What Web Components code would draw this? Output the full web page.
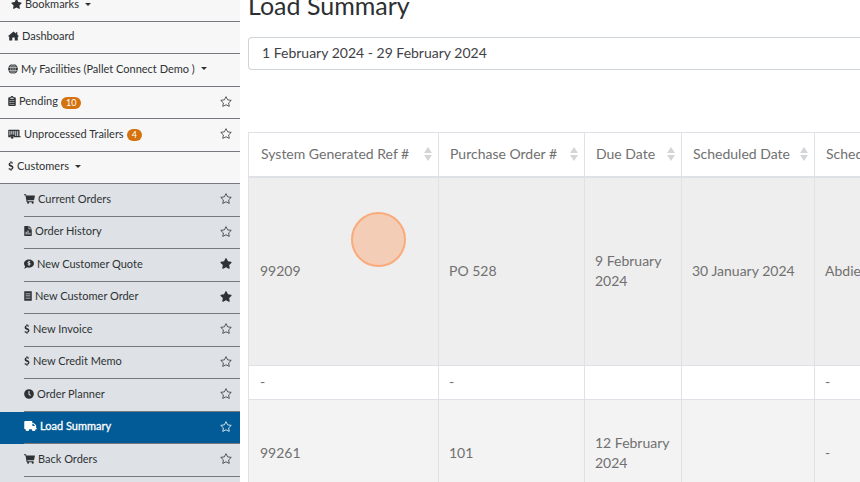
<!DOCTYPE html>
<html lang="en">
<head>
<meta charset="utf-8">
<meta name="viewport" content="width=device-width">
<title>Load Summary</title>
<style>
  html, body { margin: 0; height: 100%; }
  body { overflow: hidden; background: #fff; font-family: Lato, "Liberation Sans", sans-serif; }
</style>
</head>
<body>
<app-shell>
  <side-nav slot="nav">
    <nav-item icon="star" text="Bookmarks" caret inset></nav-item>
    <nav-item icon="home" text="Dashboard"></nav-item>
    <nav-item icon="globe" text="My Facilities (Pallet Connect Demo )" caret></nav-item>
    <nav-item icon="clipboard" text="Pending" badge="10" fav="off"></nav-item>
    <nav-item icon="trailer" text="Unprocessed Trailers" badge="4" fav="off"></nav-item>
    <nav-item icon="dollar" text="Customers" caret></nav-item>
    <nav-item sub icon="cart" text="Current Orders" fav="off"></nav-item>
    <nav-item sub icon="file" text="Order History" fav="off"></nav-item>
    <nav-item sub icon="comment" text="New Customer Quote" fav="on"></nav-item>
    <nav-item sub icon="receipt" text="New Customer Order" fav="on"></nav-item>
    <nav-item sub icon="dollar" text="New Invoice" fav="off"></nav-item>
    <nav-item sub icon="dollar" text="New Credit Memo" fav="off"></nav-item>
    <nav-item sub icon="clock" text="Order Planner" fav="off"></nav-item>
    <nav-item sub active icon="truck" text="Load Summary" fav="off"></nav-item>
    <nav-item sub icon="cart" text="Back Orders" fav="off"></nav-item>
  </side-nav>
  <load-summary></load-summary>
</app-shell>

<script>
const STAR = 'M259.3 17.8L194 150.2 47.9 171.5c-26.2 3.8-36.7 36.1-17.7 54.6l105.7 103-25 145.5c-4.5 26.3 23.2 46 46.4 33.7L288 439.6l130.7 68.7c23.2 12.2 50.9-7.4 46.4-33.7l-25-145.5 105.7-103c19-18.5 8.5-50.8-17.7-54.6L382 150.2 316.7 17.8c-11.7-23.6-45.6-23.9-57.4 0z';
/* name: [view width, markup]; every icon is 512 units high */
const ICONS = {
  star: [576, `<path d="${STAR}"/>`],
  starOutline: [576, `<path d="M288 24L366 176 540 202 414 324 444 492 288 412 132 492 162 324 36 202 210 176Z" fill="none" stroke="currentColor" stroke-width="38" stroke-linejoin="round"/>`],
  home: [576, '<path d="M288 16L8 262q-8 16 8 26h48v184q0 24 24 24h136V352q0-16 16-16h96q16 0 16 16v144h136q24 0 24-24V288h48q16-10 8-26L488 188V56h-72v70Z"/>'],
  globe: [512, '<circle cx="256" cy="256" r="250"/><g fill="none" stroke="#f7f7f7" stroke-width="30"><path d="M20 172h472M20 340h472M256 0v512"/><ellipse cx="256" cy="256" rx="112" ry="262"/></g>'],
  clipboard: [384, '<path fill-rule="evenodd" d="M48 64h72a72 72 0 0 1 144 0h72q48 0 48 48v352q0 48-48 48H48q-48 0-48-48V112Q0 64 48 64Zm144-28a26 26 0 1 0 0 52 26 26 0 0 0 0-52ZM104 120v36h176v-36ZM72 220v44h44v-44Zm80 6v32h160v-32ZM72 310v44h44v-44Zm80 6v32h160v-32ZM72 400v44h44v-44Zm80 6v32h160v-32Z"/>'],
  trailer: [640, '<path fill-rule="evenodd" d="M24 40h528q24 0 24 24v308h64v56H288a90 90 0 0 0-176 0H24Q0 428 0 404V64Q0 40 24 40Zm40 60v220h44V100Zm100 0v180h44V100Zm100 0v190h44V100Zm100 0v260h44V100Zm100 0v260h44V100Z"/><circle cx="200" cy="430" r="66"/>'],
  dollar: [288, '<path d="M122 0h44v58q48 4 88 24l-20 58q-48-20-88-20-54 0-54 34 0 28 68 48 112 32 112 126 0 104-106 122v62h-44v-58q-60-4-106-30l22-60q54 28 104 28 60 0 60-42 0-34-72-56Q18 256 18 174q0-96 104-114Z"/>'],
  cart: [576, '<path d="M0 8h96q20 0 24 20l8 40h424q24 2 20 28l-48 208q-4 18-24 20H180l8 44h296q22 6 18 34l-6 24H156q-18-2-22-20L76 64H0Z"/><circle cx="216" cy="456" r="54"/><circle cx="456" cy="456" r="54"/>'],
  file: [384, '<path fill-rule="evenodd" d="M24 0h200v136q0 24 24 24h136v328q0 24-24 24H24q-24 0-24-24V24Q0 0 24 0Zm232 0 128 128H256ZM72 300v140h50V300Zm96-70v210h50V230Zm96 110v100h50V340Z"/>'],
  comment: [512, '<path fill-rule="evenodd" d="M256 20c141 0 256 96 256 214S397 448 256 448q-55 0-104-20Q90 488 8 492q-8-10 0-18 42-46 48-92Q0 318 0 234C0 116 115 20 256 20Zm-18 68v34c-80 10-74 100-4 118 56 14 48 36 22 38q-30 0-56-16l-16 38q26 16 54 20v36h40v-36c76-12 80-100 8-122-50-14-46-34-18-38q22 0 44 12l14-40q-24-12-48-14V88Z"/>'],
  receipt: [384, '<path fill-rule="evenodd" d="M0 0l42 28 50-28 50 28 50-28 50 28 50-28 50 28 42-28v512l-42-28-50 28-50-28-50 28-50-28-50 28-50-28-42 28ZM70 126v34h244v-34Zm0 110v34h244v-34Zm0 110v34h244v-34Z"/>'],
  clock: [512, '<path fill-rule="evenodd" d="M256 8a248 248 0 1 0 0 496 248 248 0 0 0 0-496Zm-28 92h54v158l76 58-34 42-96-74Z"/>'],
  truck: [640, '<path fill-rule="evenodd" d="M48 0h320q48 0 48 48v48h44q20 0 34 14l100 100q14 14 14 34v108h16q16 0 16 16v32q0 16-16 16h-48a96 96 0 0 1-192 0H256a96 96 0 0 1-192 0H48Q0 416 0 368V48Q0 0 48 0Zm368 144v112h144L452 144Z"/><circle cx="160" cy="416" r="60"/><circle cx="480" cy="416" r="60"/>']
};
const svg = (name, h) => {
  const [w, body] = ICONS[name];
  return `<svg viewBox="0 0 ${w} 512" height="${h}" width="${Math.round(w * h / 512)}" fill="currentColor" aria-hidden="true">${body}</svg>`;
};

customElements.define('app-shell', class extends HTMLElement {
  constructor() {
    super();
    this.attachShadow({ mode: 'open' }).innerHTML = `
      <style>
        :host { display: grid; grid-template-columns: 240px minmax(0, 1fr); height: 100vh; overflow: hidden; }
        main { padding-left: 8px; overflow: hidden; }
      </style>
      <slot name="nav"></slot><main><slot></slot></main>`;
  }
});

customElements.define('side-nav', class extends HTMLElement {
  constructor() {
    super();
    this.attachShadow({ mode: 'open' }).innerHTML = `
      <style>
        :host { display: block; overflow: hidden; background: #dee2e6; }
        nav { display: flex; flex-direction: column; margin-top: -10px; }
        ::slotted(*) { min-height: 32px; }
        ::slotted(:nth-child(2n+3)) { min-height: 33px; }
      </style>
      <nav aria-label="Main"><slot></slot></nav>`;
  }
});

customElements.define('nav-item', class extends HTMLElement {
  connectedCallback() {
    const a = n => this.getAttribute(n);
    const fav = a('fav');
    this.attachShadow({ mode: 'open' }).innerHTML = `
      <style>
        :host { display: flex; flex: none; box-sizing: border-box; background: #f7f7f7; color: #2f3234; font-size: 11px; line-height: 16px; }
        :host([sub]) { background: #dee2e6; padding-left: 24px; }
        :host([active]) { background: #025a96; color: #fff; -webkit-text-stroke: 0.3px; }
        .row { flex: 1; display: flex; align-items: center; padding: 0 8px 3px; border-bottom: 1px solid #75797d; }
        :host([sub]) .row { padding-left: 0; }
        :host([inset]) .row { padding-left: 11px; }
        a { display: flex; align-items: center; gap: 3px; color: inherit; text-decoration: none; white-space: pre; }
        svg { display: block; }
        .badge { background: #d3720f; color: #fff; border-radius: 6px; padding: 0 5px; font-size: 9px; line-height: 12px; margin-top: 3px; }
        .caret { border: 3px solid transparent; border-top-color: currentColor; border-bottom: 0; margin-left: 3px; }
        button { margin-left: auto; border: 0; padding: 0; background: none; color: inherit; }
      </style>
      <div class="row">
        <a href="#"${this.hasAttribute('active') ? ' aria-current="page"' : ''}>${svg(a('icon'), 10)}<span>${a('text')}</span>${a('badge') ? `<span class="badge">${a('badge')}</span>` : ''}${this.hasAttribute('caret') ? '<i class="caret"></i>' : ''}</a>
        ${fav ? `<button type="button" aria-label="Bookmark ${a('text')}" aria-pressed="${fav === 'on'}">${svg(fav === 'on' ? 'star' : 'starOutline', 11)}</button>` : ''}
      </div>`;
  }
});

customElements.define('sort-header', class extends HTMLElement {
  constructor() {
    super();
    this.attachShadow({ mode: 'open' }).innerHTML = `
      <style>
        :host { display: block; }
        button { display: flex; width: 100%; align-items: center; justify-content: space-between; border: 0; padding: 0; background: none; color: inherit; font: inherit; white-space: nowrap; }
        svg { flex: none; }
      </style>
      <button type="button"><slot></slot><svg width="8" height="14" viewBox="0 0 8 14" fill="#d3d5d7" aria-hidden="true"><path d="M4 0 8 6H0ZM0 8h8l-4 6Z"/></svg></button>`;
  }
});

customElements.define('load-summary', class extends HTMLElement {
  constructor() {
    super();
    this.attachShadow({ mode: 'open' }).innerHTML = `
      <style>
        :host { display: flow-root; position: relative; color: #707070; font-size: 14px; line-height: 20px; }
        h1 { margin: -10px 0 17px; color: #2d3033; font-size: 25px; line-height: 30px; font-weight: 400; }
        input { display: block; box-sizing: border-box; width: 100%; height: 33px; margin-bottom: 62px; padding: 0 13px 3px; border: 1px solid #ced4da; border-right: 0; border-radius: 4px 0 0 4px; background: #fff; color: #3f4246; font: inherit; }
        table { table-layout: fixed; border-collapse: collapse; width: 100%; min-width: 776px; }
        th, td { border: 1px solid #dee2e6; padding: 6px 6px 7px 10px; text-align: left; font-weight: 400; }
        th { height: 29px; padding: 6px 6px 8px 11px; border-bottom-width: 2px; }
        th:first-child { padding-left: 12px; }
        td:first-child { padding-left: 11px; }
        .tall { background: #eee; }
        .tall td { height: 174px; }
        .stripe { background: #f3f3f3; }
        .stripe td { height: 94px; }
        .marker { position: absolute; left: 103px; top: 212px; box-sizing: border-box; width: 55px; height: 55px; border: 2px solid #faab7c; border-radius: 50%; background: #f4cdb7; }
      </style>
      <h1>Load Summary</h1>
      <input type="text" aria-label="Date range" value="1 February 2024 - 29 February 2024">
      <table>
        <colgroup><col style="width:190px"><col style="width:146px"><col style="width:97px"><col style="width:133px"><col></colgroup>
        <thead><tr>
          <th><sort-header>System Generated Ref #</sort-header></th>
          <th><sort-header>Purchase Order #</sort-header></th>
          <th><sort-header>Due Date</sort-header></th>
          <th><sort-header>Scheduled Date</sort-header></th>
          <th><sort-header>Scheduled By</sort-header></th>
        </tr></thead>
        <tbody>
          <tr class="tall"><td>99209</td><td>PO 528</td><td>9 February 2024</td><td>30 January 2024</td><td>Abdiel</td></tr>
          <tr><td>-</td><td>-</td><td></td><td></td><td>-</td></tr>
          <tr class="stripe"><td>99261</td><td>101</td><td>12 February 2024</td><td></td><td>-</td></tr>
        </tbody>
      </table>
      <div class="marker"></div>`;
  }
});
</script>
</body>
</html>
